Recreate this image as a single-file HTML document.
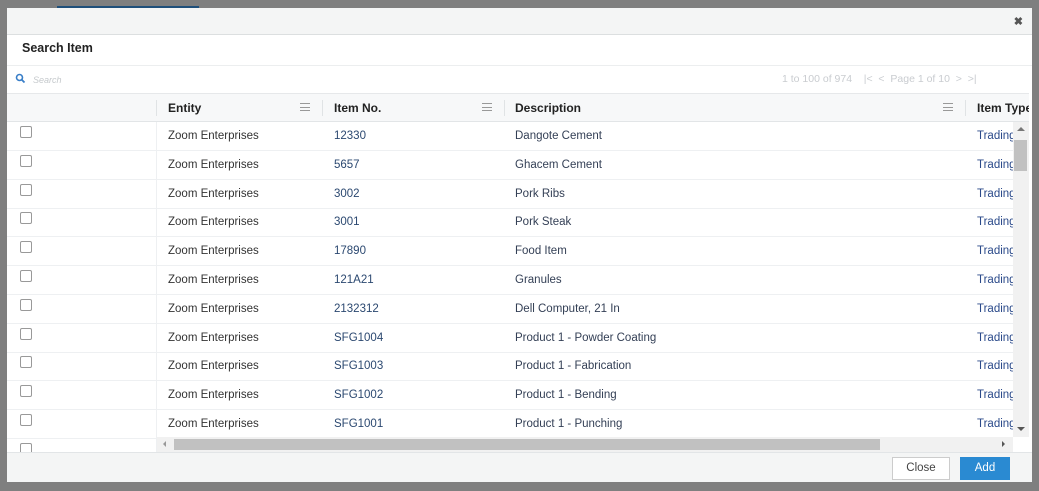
<!DOCTYPE html>
<html><head><style>
*{box-sizing:border-box;margin:0;padding:0}
body{width:1039px;height:491px;background:#7f7f7f;font-family:"Liberation Sans",sans-serif;font-size:12px;position:relative;overflow:hidden}
.topline{position:absolute;left:57px;top:6px;width:142px;height:2px;background:#1f4f7a}
.modal{position:absolute;left:7px;top:8px;width:1025px;height:474px;background:#fff;overflow:hidden}
.hdr{position:absolute;left:0;top:0;width:100%;height:27px;background:#f4f5f5;border-bottom:1px solid #dcdfe0}
.x{position:absolute;right:9px;top:7px;font-size:11px;color:#555;font-weight:bold}
.title{position:absolute;left:15px;top:33px;font-weight:bold;font-size:12.5px;color:#222}
.sline{position:absolute;left:0;top:57px;width:100%;height:1px;background:#eceeef}
.srch{position:absolute;left:0;top:58px;width:100%;height:28px}
.srch .ph{position:absolute;left:26px;top:9px;font-size:9px;font-style:italic;color:#c5c9cc}
.pg{position:absolute;left:775px;top:7px;font-size:10.5px;color:#c9ccd0;white-space:pre}
.gh{position:absolute;left:0;top:85px;width:1022px;height:29px;background:#f7f8f9;border-top:1px solid #e6e8ea;border-bottom:1px solid #e2e5e7;overflow:hidden}
.gh span{position:absolute;top:7px;font-weight:bold;color:#222;font-size:12px;white-space:nowrap}
.menu{position:absolute;top:9px;width:10px;height:8px;border-top:1px solid #999;border-bottom:1px solid #999}
.menu:after{content:"";position:absolute;left:0;top:3px;width:10px;height:1px;background:#999}
.sep{position:absolute;top:6px;width:1px;height:16px;background:#e0e3e5}
.row{position:absolute;left:0;width:1006px;height:29px;border-bottom:1px solid #eef0f2;overflow:hidden}
.row span{position:absolute;top:8px;font-size:11.5px;white-space:nowrap}
.cb{position:absolute;left:13px;top:4px;width:12px;height:12px;border:1px solid #999;border-radius:2px;background:#fff}
.lcol{position:absolute;left:149px;top:114px;width:1px;height:330px;background:#eef0f2}
.e{left:161px;color:#333}.n{left:327px;color:#2b4870}.d{left:508px;color:#333f55}.t{left:970px;color:#2b4a8a}
.vs{position:absolute;left:1006px;top:114px;width:16px;height:315px;background:#f1f1f1}
.vs .th{position:absolute;left:1px;top:18px;width:13px;height:31px;background:#c1c1c1}
.hs{position:absolute;left:150px;top:429px;width:856px;height:15px;background:#f1f1f1}
.hs .th{position:absolute;left:17px;top:2px;width:706px;height:11px;background:#c1c1c1}
.ft{position:absolute;left:0;top:444px;width:100%;height:30px;background:#f4f5f5;border-top:1px solid #e2e5e7}
.btn{position:absolute;top:4px;height:23px;font-size:11.5px;text-align:center;line-height:21px}
</style></head><body>
<div class="topline"></div>
<div class="modal">
<div class="hdr"><div class="x">✖</div></div>
<div class="title">Search Item</div>
<div class="sline"></div>
<div class="srch">
<svg style="position:absolute;left:8px;top:7px" width="11" height="11" viewBox="0 0 11 11"><circle cx="4.5" cy="4.5" r="3" fill="none" stroke="#3a7fc8" stroke-width="1.6"/><line x1="6.8" y1="6.8" x2="9.5" y2="9.5" stroke="#3a7fc8" stroke-width="1.8"/></svg>
<div class="ph">Search</div>
<div class="pg">1 to 100 of 974    |&lt;  &lt;  Page 1 of 10  &gt;  &gt;|</div>
</div>
<div class="gh">
<div class="sep" style="left:149px"></div>
<span style="left:161px">Entity</span><div class="menu" style="left:293px"></div>
<div class="sep" style="left:315px"></div>
<span style="left:327px">Item No.</span><div class="menu" style="left:475px"></div>
<div class="sep" style="left:497px"></div>
<span style="left:508px">Description</span><div class="menu" style="left:936px"></div>
<div class="sep" style="left:958px"></div>
<span style="left:970px">Item Type</span>
</div>
<div class="lcol"></div>
<div class="row" style="top:114px"><div class="cb"></div><span class="e">Zoom Enterprises</span><span class="n">12330</span><span class="d">Dangote Cement</span><span class="t">Trading</span></div>
<div class="row" style="top:143px"><div class="cb"></div><span class="e">Zoom Enterprises</span><span class="n">5657</span><span class="d">Ghacem Cement</span><span class="t">Trading</span></div>
<div class="row" style="top:172px"><div class="cb"></div><span class="e">Zoom Enterprises</span><span class="n">3002</span><span class="d">Pork Ribs</span><span class="t">Trading</span></div>
<div class="row" style="top:200px"><div class="cb"></div><span class="e">Zoom Enterprises</span><span class="n">3001</span><span class="d">Pork Steak</span><span class="t">Trading</span></div>
<div class="row" style="top:229px"><div class="cb"></div><span class="e">Zoom Enterprises</span><span class="n">17890</span><span class="d">Food Item</span><span class="t">Trading</span></div>
<div class="row" style="top:258px"><div class="cb"></div><span class="e">Zoom Enterprises</span><span class="n">121A21</span><span class="d">Granules</span><span class="t">Trading</span></div>
<div class="row" style="top:287px"><div class="cb"></div><span class="e">Zoom Enterprises</span><span class="n">2132312</span><span class="d">Dell Computer, 21 In</span><span class="t">Trading</span></div>
<div class="row" style="top:316px"><div class="cb"></div><span class="e">Zoom Enterprises</span><span class="n">SFG1004</span><span class="d">Product 1 - Powder Coating</span><span class="t">Trading</span></div>
<div class="row" style="top:344px"><div class="cb"></div><span class="e">Zoom Enterprises</span><span class="n">SFG1003</span><span class="d">Product 1 - Fabrication</span><span class="t">Trading</span></div>
<div class="row" style="top:373px"><div class="cb"></div><span class="e">Zoom Enterprises</span><span class="n">SFG1002</span><span class="d">Product 1 - Bending</span><span class="t">Trading</span></div>
<div class="row" style="top:402px"><div class="cb"></div><span class="e">Zoom Enterprises</span><span class="n">SFG1001</span><span class="d">Product 1 - Punching</span><span class="t">Trading</span></div>
<div class="row" style="top:431px;border:none"><div class="cb"></div></div>
<div class="vs"><div class="th"></div>
<div style="position:absolute;left:4px;top:5px;border:4px solid transparent;border-bottom:4px solid #777;border-top:0"></div>
<div style="position:absolute;left:4px;top:305px;border:4px solid transparent;border-top:4px solid #555;border-bottom:0"></div></div>
<div class="hs"><div class="th"></div>
<div style="position:absolute;left:6px;top:4px;border:3px solid transparent;border-right:3px solid #999;border-left:0"></div>
<div style="position:absolute;left:845px;top:4px;border:3px solid transparent;border-left:3px solid #555;border-right:0"></div></div>
<div class="ft">
<div class="btn" style="left:885px;width:58px;border:1px solid #ccc;background:#fff;color:#444">Close</div>
<div class="btn" style="left:953px;width:50px;background:#2a8ad2;color:#fff;line-height:23px">Add</div>
</div>
</div>
</body></html>
